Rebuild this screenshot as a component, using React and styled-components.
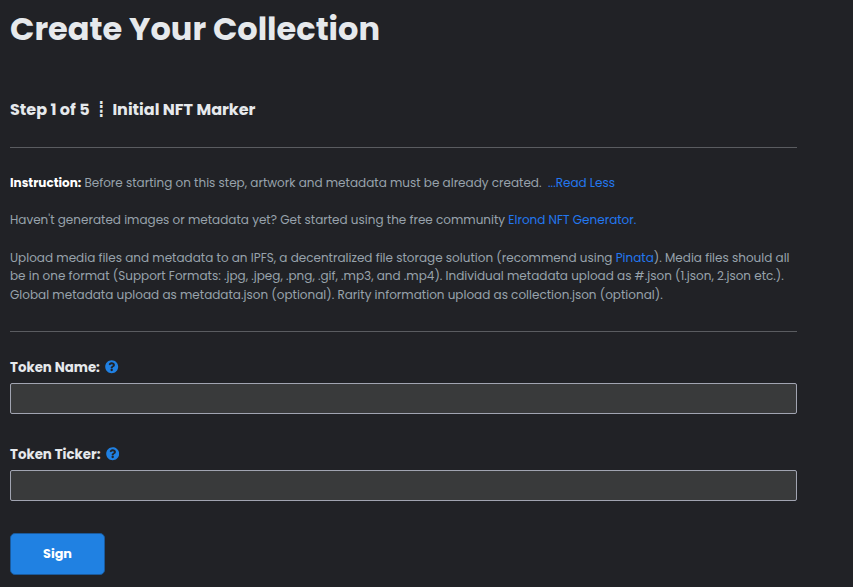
import React from 'react';
import styled, { createGlobalStyle } from 'styled-components';
import { FaQuestionCircle } from 'react-icons/fa';

const GlobalStyle = createGlobalStyle`
  * { box-sizing: border-box; }
  body {
    margin: 0;
    background: #212226;
    color: #e9ecef;
    font-family: Poppins, Inter, sans-serif;
    overflow: hidden;
  }
`;

const Page = styled.main`
  display: flex;
  flex-direction: column;
  align-items: stretch;
  width: 797px;
  height: 587px;
  padding: 8px 0 0 10px;
`;

const Title = styled.h1`
  margin: 0;
  font-size: 32px;
  font-weight: 700;
  line-height: 42px;
  color: #e6e9ec;
  white-space: nowrap;
`;

const StepHeading = styled.h2`
  display: flex;
  align-items: center;
  margin: 47px 0 0;
  height: 25px;
  font-size: 16px;
  font-weight: 700;
  line-height: 25px;
  color: #e6e9ec;
  white-space: nowrap;
`;

const StepCount = styled.span`
  width: 80px;
`;

const StepDivider = styled.span`
  width: 22px;
  padding-top: 2px;
  font-family: "Liberation Mono", monospace;
  font-size: 15px;
  line-height: 16px;
  text-align: center;
`;

const StepName = styled.span`
  margin-left: 0.4px;
`;

const Rule = styled.hr`
  width: 100%;
  height: 1px;
  margin: ${(p) => p.$top}px 0 0;
  border: 0;
  background: #5a5c60;
`;

const Instructions = styled.section`
  display: flex;
  flex-direction: column;
  gap: 18.8px;
  height: 131px;
  margin-top: 26px;
  font-size: 12px;
  line-height: 18.6px;
  color: #98a2ac;
`;

const Paragraph = styled.p`
  margin: 0;
`;

const Strong = styled.strong`
  font-weight: 700;
  color: #fff;
`;

const Link = styled.a`
  color: #2378f0;
  text-decoration: none;
`;

const ReadLess = styled(Link)`
  margin-left: 3.4px;
`;

const Field = styled.div`
  display: flex;
  flex-direction: column;
  margin-top: ${(p) => p.$top}px;
`;

const Label = styled.label`
  display: flex;
  align-items: center;
  gap: 5.3px;
  height: 20px;
  margin-bottom: 6px;
  padding-top: 1px;
  font-size: 13.35px;
  font-weight: 700;
  line-height: 20px;
  color: #e6e9ec;
`;

const HelpIcon = styled(FaQuestionCircle)`
  width: 13.4px;
  height: 13.4px;
  margin-top: -1px;
  color: #2080e2;
`;

const Input = styled.input`
  width: 100%;
  height: 31px;
  padding: 0 8px;
  border: 1px solid #a1a4b1;
  border-radius: 2px;
  outline: none;
  background: #393a3b;
  color: #e9ecef;
  font: inherit;
`;

const SignButton = styled.button`
  width: 95px;
  height: 42px;
  margin-top: 32px;
  padding: 0;
  border: 1px solid #1b5a9b;
  border-radius: 5px;
  background: #2081e2;
  color: #fff;
  font-family: inherit;
  font-size: 12.8px;
  font-weight: 700;
`;

export default function App() {
  return (
    <>
      <GlobalStyle />
      <Page>
        <Title>Create Your Collection</Title>
        <StepHeading>
          <StepCount>Step 1 of 5</StepCount>
          <StepDivider>┋</StepDivider>
          <StepName>Initial NFT Marker</StepName>
        </StepHeading>
        <Rule $top={25} />
        <Instructions>
          <Paragraph>
            <Strong>Instruction:</Strong> Before starting on this step, artwork and metadata must be already
            created. <ReadLess href="#">...Read Less</ReadLess>
          </Paragraph>
          <Paragraph>
            Haven't generated images or metadata yet? Get started using the free community{' '}
            <Link href="#">Elrond NFT Generator.</Link>
          </Paragraph>
          <Paragraph>
            Upload media files and metadata to an IPFS, a decentralized file storage solution (recommend
            using <Link href="#">Pinata</Link>). Media files should all be in one format (Support Formats:
            .jpg, .jpeg, .png, .gif, .mp3, and .mp4). Individual metadata upload as #.json (1.json, 2.json
            etc.). Global metadata upload as metadata.json (optional). Rarity information upload as
            collection.json (optional).
          </Paragraph>
        </Instructions>
        <Rule $top={26} />
        <Field $top={25}>
          <Label htmlFor="token-name">
            Token Name:
            <HelpIcon />
          </Label>
          <Input id="token-name" />
        </Field>
        <Field $top={30}>
          <Label htmlFor="token-ticker">
            Token Ticker:
            <HelpIcon />
          </Label>
          <Input id="token-ticker" />
        </Field>
        <SignButton type="button">Sign</SignButton>
      </Page>
    </>
  );
}
